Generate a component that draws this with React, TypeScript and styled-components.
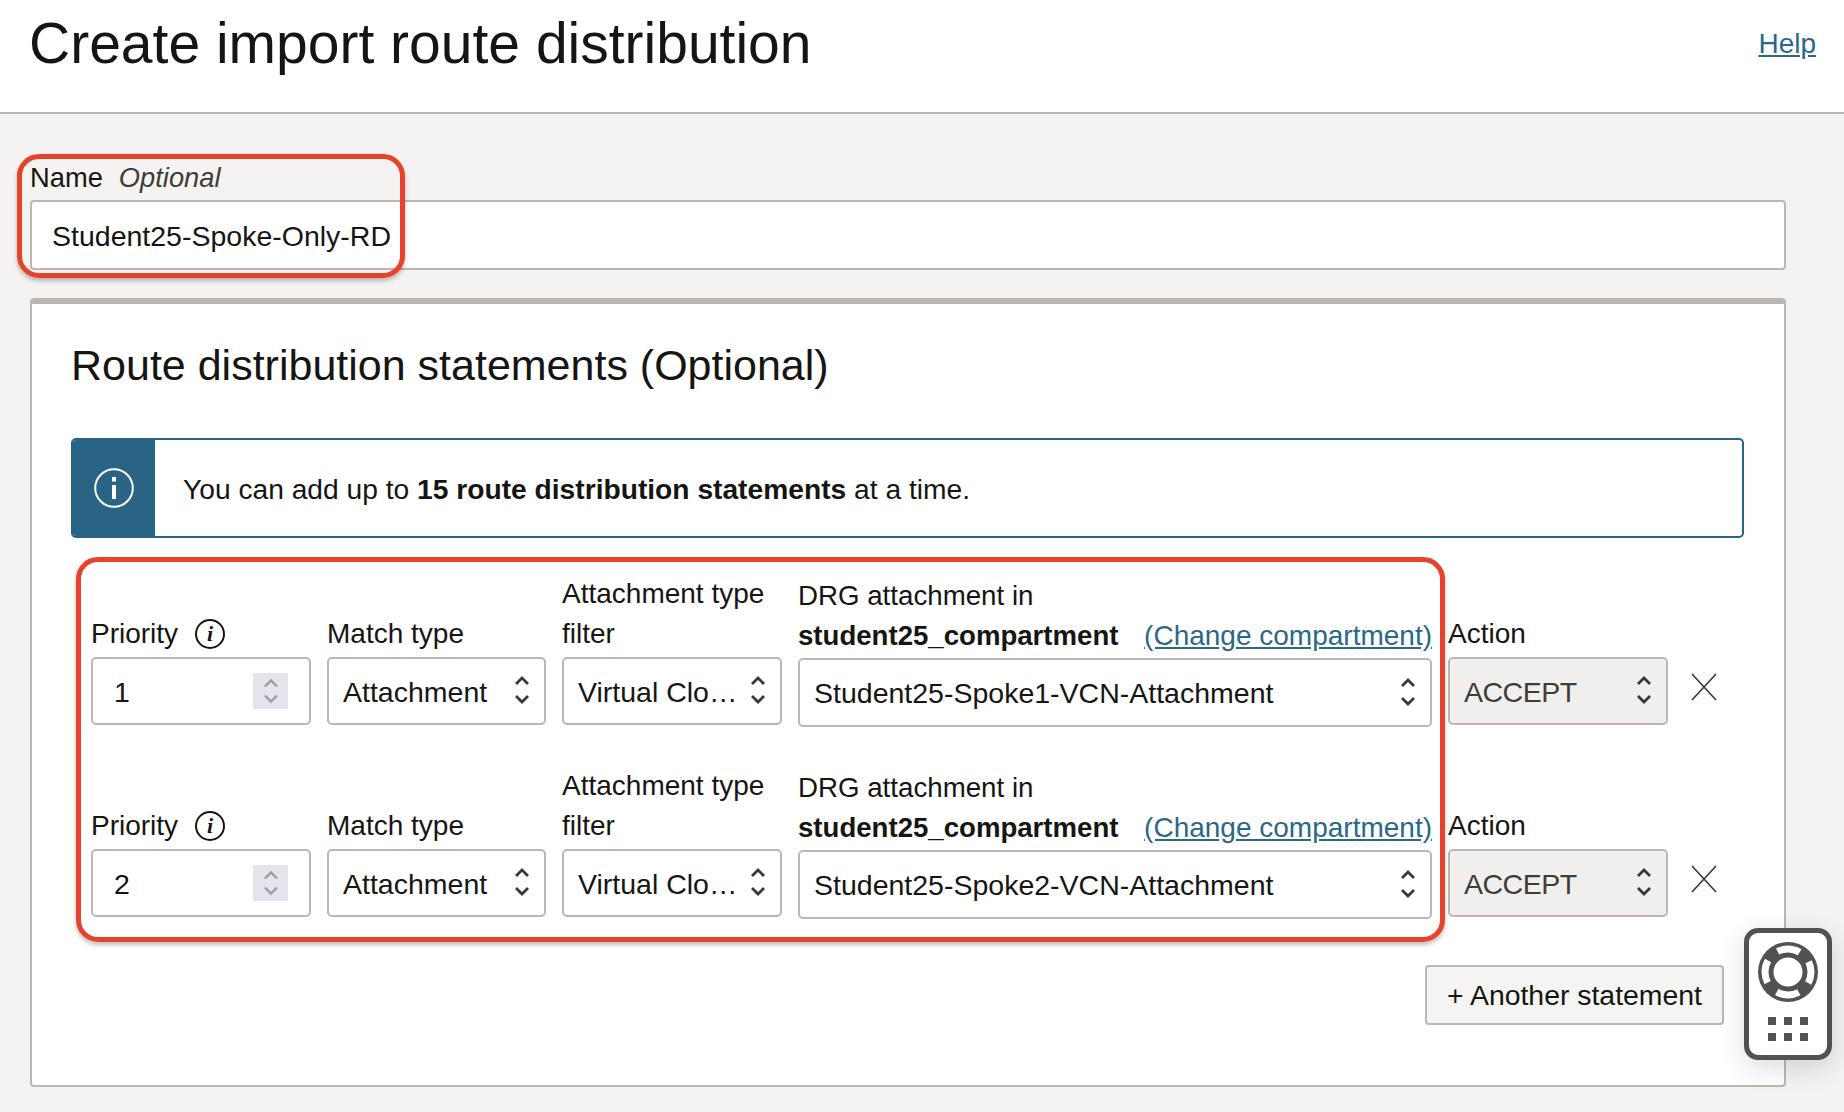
import React from 'react';
import styled, { createGlobalStyle } from 'styled-components';

const GlobalStyle = createGlobalStyle`
    html, body {
        margin: 0;
        padding: 0;
        height: 1112px;
        overflow: hidden;
        background: #f4f3f1;
        color: #161513;
        font-family: "Liberation Sans", Arial, sans-serif;
    }
`;

const Page = styled.div`
    position: relative;
    height: 1112px;
    overflow: hidden;
`;

const Header = styled.header`
    display: flex;
    justify-content: space-between;
    height: 114px;
    padding: 12px 28px 0 29px;
    box-sizing: border-box;
    background: #fff;
    border-bottom: 2px solid #bcb7b2;
`;

const Title = styled.h1`
    margin: 0;
    font-size: 57px;
    line-height: 62px;
    font-weight: 400;
`;

const HelpLink = styled.a`
    margin-top: 15px;
    font-size: 28px;
    line-height: 34px;
    color: #2b6788;
    text-decoration: underline;
`;

const Content = styled.main`
    position: relative;
    padding: 40px 58px 0 30px;
`;

const FieldLabel = styled.div`
    margin: 1px 0 -1px;
    font-size: 27.3px;
    line-height: 46px;
`;

const OptionalMark = styled.i`
    margin-left: 16px;
    color: #3f3d3a;
`;

const NameInput = styled.div`
    height: 70px;
    padding: 2px 0 0 20px;
    box-sizing: border-box;
    display: flex;
    align-items: center;
    background: #fff;
    border: 2px solid #bcb7b2;
    border-radius: 4px;
    font-size: 28.5px;
`;

const Panel = styled.section`
    margin-top: 28px;
    height: 789px;
    box-sizing: border-box;
    padding: 0 40px 0 39px;
    background: #fff;
    border: 2px solid #bcb7b2;
    border-top-width: 6px;
    border-radius: 4px;
`;

const PanelTitle = styled.h2`
    margin: 36px 0 0;
    font-size: 43px;
    line-height: 50px;
    font-weight: 400;
`;

const Banner = styled.div`
    display: flex;
    margin-top: 48px;
    height: 100px;
    box-sizing: border-box;
    background: #fff;
    border: 2px solid #2a6485;
    border-radius: 5px;
    overflow: hidden;
`;

const BannerIcon = styled.div`
    width: 82px;
    display: flex;
    align-items: center;
    justify-content: center;
    background: #2a6485;
`;

const BannerText = styled.div`
    display: flex;
    align-items: center;
    padding: 2px 0 0 28px;
    font-size: 28.2px;
`;

const Rows = styled.div`
    margin-top: 36px;
    padding-left: 20px;
    display: flex;
    flex-direction: column;
    gap: 39px;
`;

const Row = styled.div`
    display: grid;
    grid-template-columns: 220px 219px 220px 634px 220px 1fr;
    column-gap: 16px;
    align-items: end;
`;

const Cell = styled.div<{ $lift?: boolean }>`
    display: flex;
    flex-direction: column;
    margin-bottom: ${p => (p.$lift ? 2 : 0)}px;
`;

const Label = styled.div`
    display: flex;
    align-items: center;
    font-size: 28px;
    line-height: 40px;
    white-space: nowrap;
`;

const DrgLabel = styled(Label)`
    font-size: 27.7px;
    margin-top: 2px;
`;

const CompartmentLine = styled(Label)`
    justify-content: space-between;
    margin-bottom: -1px;
`;

const Hint = styled.span`
    width: 30px;
    height: 30px;
    margin-left: 17px;
    box-sizing: border-box;
    display: flex;
    align-items: center;
    justify-content: center;
    border: 2px solid #161513;
    border-radius: 50%;
    font-family: "Liberation Serif", serif;
    font-style: italic;
    font-weight: 700;
    font-size: 22px;
    line-height: 1;
`;

const Compartment = styled.b`
    font-weight: 700;
    font-size: 27.6px;
`;

const ChangeLink = styled.a`
    color: #2b6788;
    text-decoration: underline;
`;

const Control = styled.div<{ $tall?: boolean; $disabled?: boolean; $inset?: number }>`
    height: ${p => (p.$tall ? 69 : 68)}px;
    margin-top: 3px;
    padding: 2px 14px 0 ${p => p.$inset ?? 14}px;
    box-sizing: border-box;
    display: flex;
    align-items: center;
    justify-content: space-between;
    background: ${p => (p.$disabled ? '#f1efed' : '#fff')};
    color: ${p => (p.$disabled ? '#3f3d3a' : '#161513')};
    border: 2px solid #bcb7b2;
    border-radius: 5px;
    font-size: 28.5px;
    letter-spacing: ${p => (p.$disabled ? '-0.5px' : '0')};
    white-space: nowrap;
`;

const Spinner = styled.span`
    width: 35px;
    height: 36px;
    margin: -2px 7px 0 0;
    display: flex;
    align-items: center;
    justify-content: center;
    background: #e4e4ec;
`;

const SelectArrows = styled.span`
    display: flex;
    margin-top: -4px;
`;

const RemoveCell = styled.div`
    height: 68px;
    margin-bottom: 2px;
    padding: 16px 0 0 6px;
    box-sizing: border-box;
`;

const Actions = styled.div`
    display: flex;
    justify-content: flex-end;
    margin-top: 46px;
    padding-right: 20px;
`;

const AddButton = styled.button`
    width: 299px;
    height: 60px;
    padding: 0;
    background: #f5f4f2;
    color: #161513;
    border: 2px solid #bcb7b2;
    border-radius: 4px;
    font-family: inherit;
    font-size: 28.4px;
`;

const NameMark = styled.div`
    position: absolute;
    left: 17px;
    top: 154px;
    width: 388px;
    height: 124px;
    box-sizing: border-box;
    border: 5px solid #e5432b;
    border-radius: 22px;
    box-shadow: 0 3px 4px rgba(0, 0, 0, 0.25);
    pointer-events: none;
`;

const RowsMark = styled(NameMark)`
    left: 76px;
    top: 557px;
    width: 1369px;
    height: 385px;
`;

const HelpWidget = styled.div`
    position: absolute;
    left: 1744px;
    top: 928px;
    width: 88px;
    height: 132px;
    box-sizing: border-box;
    display: flex;
    flex-direction: column;
    align-items: center;
    padding-top: 9px;
    background: #fff;
    border: 5px solid #54524f;
    border-radius: 14px;
    box-shadow: 0 8px 28px rgba(0, 0, 0, 0.14);
`;

const Dots = styled.div`
    margin-top: 15px;
    display: grid;
    grid-template-columns: repeat(3, 8px);
    gap: 8px;
`;

const Dot = styled.span`
    height: 8px;
    background: #54524f;
`;

const UpDown = ({ color = '#3a3836', weight = 2.8, gap = 18 }: { color?: string; weight?: number; gap?: number }) => (
    <svg width="16" height="30" viewBox="0 0 16 30" fill="none" stroke={color} strokeWidth={weight}>
        <path d={`M2 ${15 - gap / 2 + 3} L8 ${15 - gap / 2 - 3} L14 ${15 - gap / 2 + 3}`} />
        <path d={`M2 ${15 + gap / 2 - 3} L8 ${15 + gap / 2 + 3} L14 ${15 + gap / 2 - 3}`} />
    </svg>
);

const Lifebuoy = () => (
    <svg width="60" height="60" viewBox="0 0 60 60">
        <circle cx="30" cy="30" r="30" fill="#54524f" />
        <circle cx="30" cy="30" r="14.5" fill="#fff" />
        <circle cx="30" cy="30" r="23" fill="none" stroke="#fff" strokeWidth="7" strokeDasharray="23 13.13" strokeDashoffset="11.5" />
    </svg>
);

const statements = [
    { priority: '1', attachment: 'Student25-Spoke1-VCN-Attachment' },
    { priority: '2', attachment: 'Student25-Spoke2-VCN-Attachment' },
];

const App = () => (
    <Page>
        <GlobalStyle />
        <Header>
            <Title>Create import route distribution</Title>
            <HelpLink>Help</HelpLink>
        </Header>
        <Content>
            <FieldLabel>Name<OptionalMark>Optional</OptionalMark></FieldLabel>
            <NameInput>Student25-Spoke-Only-RD</NameInput>
            <Panel>
                <PanelTitle>Route distribution statements (Optional)</PanelTitle>
                <Banner>
                    <BannerIcon>
                        <svg width="40" height="40" viewBox="0 0 40 40" fill="none" stroke="#fff">
                            <circle cx="20" cy="20" r="18.8" strokeWidth="2" />
                            <path d="M20 17 V31" strokeWidth="4" />
                            <path d="M20 9 V13.5" strokeWidth="4" />
                        </svg>
                    </BannerIcon>
                    <BannerText>
                        <span>You can add up to <b>15 route distribution statements</b> at a time.</span>
                    </BannerText>
                </Banner>
                <Rows>
                    {statements.map(s => (
                        <Row key={s.priority}>
                            <Cell $lift>
                                <Label>Priority<Hint>i</Hint></Label>
                                <Control $inset={21}>
                                    {s.priority}
                                    <Spinner><UpDown color="#9c9ca8" weight={2.4} gap={15} /></Spinner>
                                </Control>
                            </Cell>
                            <Cell $lift>
                                <Label>Match type</Label>
                                <Control>Attachment<SelectArrows><UpDown /></SelectArrows></Control>
                            </Cell>
                            <Cell $lift>
                                <Label>Attachment type</Label>
                                <Label>filter</Label>
                                <Control>Virtual Clo…<SelectArrows><UpDown /></SelectArrows></Control>
                            </Cell>
                            <Cell>
                                <DrgLabel>DRG attachment in</DrgLabel>
                                <CompartmentLine>
                                    <Compartment>student25_compartment</Compartment>
                                    <ChangeLink>(Change compartment)</ChangeLink>
                                </CompartmentLine>
                                <Control $tall>{s.attachment}<SelectArrows><UpDown /></SelectArrows></Control>
                            </Cell>
                            <Cell $lift>
                                <Label>Action</Label>
                                <Control $disabled>ACCEPT<SelectArrows><UpDown /></SelectArrows></Control>
                            </Cell>
                            <RemoveCell>
                                <svg width="28" height="28" viewBox="0 0 28 28" stroke="#3f3d3a" strokeWidth="1.7">
                                    <path d="M2 1 L26 27 M26 1 L2 27" />
                                </svg>
                            </RemoveCell>
                        </Row>
                    ))}
                </Rows>
                <Actions>
                    <AddButton>+ Another statement</AddButton>
                </Actions>
            </Panel>
        </Content>
        <NameMark />
        <RowsMark />
        <HelpWidget>
            <Lifebuoy />
            <Dots>
                {[0, 1, 2, 3, 4, 5].map(i => <Dot key={i} />)}
            </Dots>
        </HelpWidget>
    </Page>
);

export default App;
